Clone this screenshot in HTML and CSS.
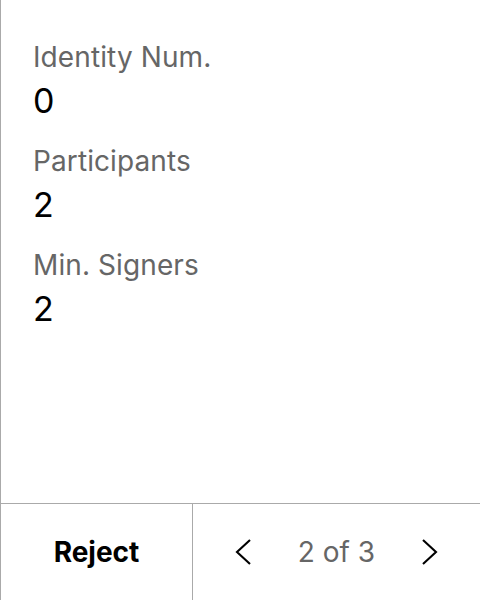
FILE: index.html
```html
<!DOCTYPE html>
<html>
<head>
<meta charset="utf-8">
<link rel="stylesheet" href="styles.css">
</head>
<body>
<div class="screen">
  <div class="content">
    <div class="field">
      <div class="label">Identity Num.</div>
      <div class="value">0</div>
    </div>
    <div class="field">
      <div class="label">Participants</div>
      <div class="value">2</div>
    </div>
    <div class="field">
      <div class="label">Min. Signers</div>
      <div class="value">2</div>
    </div>
  </div>
  <div class="bar">
    <div class="reject">Reject</div>
    <div class="pager">
      <svg class="chev" width="18" height="26" viewBox="0 0 18 26"><path d="M16 1 L3 13 L16 25" fill="none" stroke="#000" stroke-width="2.1"/></svg>
      <span class="count">2 of 3</span>
      <svg class="chev" width="18" height="26" viewBox="0 0 18 26"><path d="M2 1 L15 13 L2 25" fill="none" stroke="#000" stroke-width="2.1"/></svg>
    </div>
  </div>
</div>
</body>
</html>
```
FILE: styles.css
```css
html, body { margin: 0; padding: 0; background: #fff; }
.screen {
  width: 480px; height: 600px; box-sizing: border-box;
  border-left: 1px solid #aaa;
  display: flex; flex-direction: column;
  font-family: Inter, "Noto Sans", sans-serif;
}
.content { flex: 1; padding: 39px 0 0 32px; display: flex; flex-direction: column; gap: 20px; }
.label { font-size: 28px; color: #666; line-height: 36px; letter-spacing: 0.1px; }
.value { font-size: 34px; color: #000; line-height: 44px; margin-top: 4px; }
.bar { height: 96px; border-top: 1px solid #aaa; display: flex; }
.reject { width: 192px; box-sizing: border-box; border-right: 1px solid #aaa; display: flex; align-items: center; justify-content: center; font-size: 28px; font-weight: 700; color: #000; }
.pager { flex: 1; display: flex; align-items: center; justify-content: space-between; padding: 0 41px 0 41px; }
.count { font-size: 28px; color: #666; }
.chev { display: block; }
```
